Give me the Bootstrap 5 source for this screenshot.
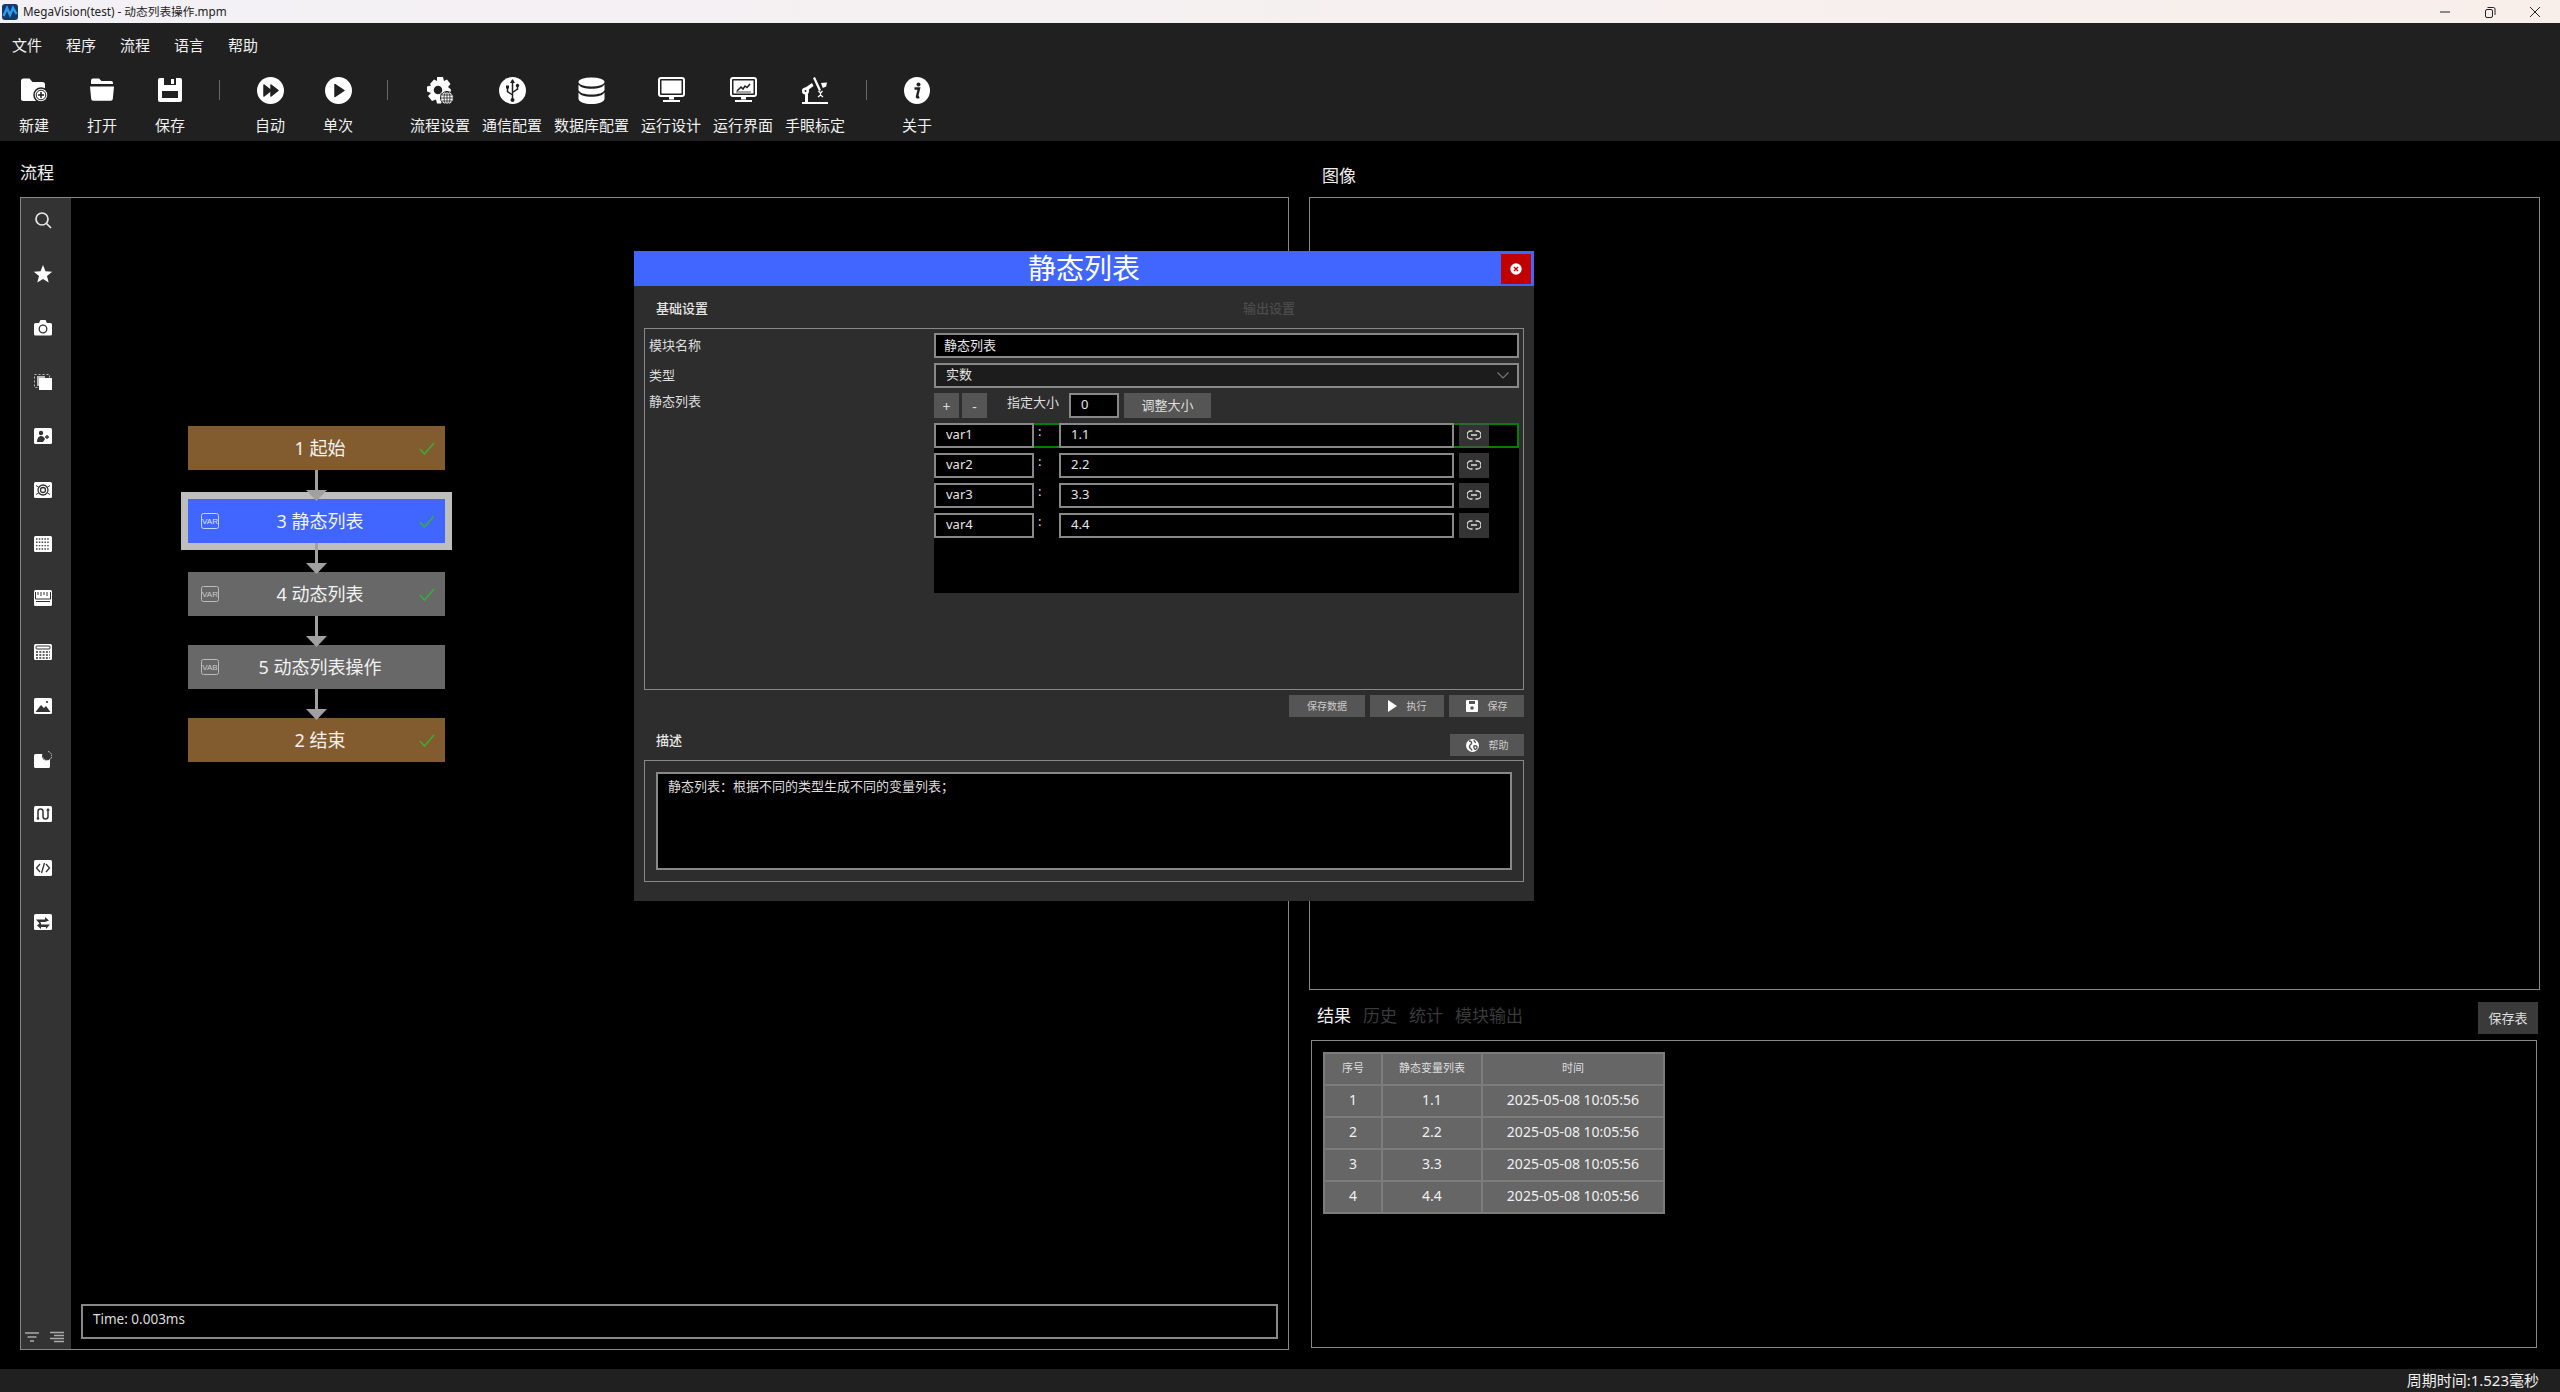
<!DOCTYPE html>
<html lang="zh-CN">
<head>
  <meta charset="UTF-8" />
  <title>MegaVision(test) - 动态列表操作.mpm</title>
  <link href="https://cdn.jsdelivr.net/npm/bootstrap@5.3.0/dist/css/bootstrap.min.css" rel="stylesheet" />
  <style>
    html, body {
      height: 100%;
      background: #000;
      color: #eee;
      font-family: "Noto Sans", "Noto Sans CJK SC", sans-serif;
      font-size: 13px;
      overflow: hidden;
    }
    svg { display: block; flex-shrink: 0; }

    .app-shell { height: 1392px; position: relative; }

    /* window chrome */
    .title-strip {
      height: 23px;
      background: linear-gradient(90deg, #f3f1f6, #f8efeb);
      color: #222;
      font-size: 11.7px;
      line-height: 23px;
      padding-left: 2px;
    }
    .title-strip span.win-name { margin-left: 5px; }
    .win-ctrl { margin-left: auto; padding-right: 18px; gap: 31px; }
    .menu-strip { height: 44px; background: #202020; padding: 11px 0 0 12px; gap: 24px; font-size: 15px; line-height: 22px; color: #f0f0f0; }
    .tool-strip { height: 74px; background: #202020; }
    .tool-item { min-width: 68px; padding: 10px 6px 0; text-align: center; font-size: 15px; line-height: 20px; color: #f0f0f0; white-space: nowrap; }
    .tool-ico { height: 26px; margin-bottom: 12px; display: flex; justify-content: center; }
    .tool-sep { width: 1px; height: 20px; background: #666; margin: 13px 16px 0 15px; }

    /* main columns */
    .main-area { height: 1228px; }
    .col-flow { width: 1269px; margin-left: 20px; }
    .col-view { width: 1231px; margin-left: 20px; }
    .pane-head { font-size: 17px; line-height: 24px; padding-top: 20px; margin-bottom: 12px; color: #eee; }
    .col-view .pane-head { padding: 23px 0 0 13px; margin-bottom: 9px; }

    .flow-pane { height: 1153px; border: 1px solid #888; }
    .side-rail { width: 50px; background: #333; padding: 13px 6px 0 0; gap: 36px; }
    .side-foot { margin: auto 0 6px 3px; gap: 11px; }
    .flow-canvas { min-width: 0; }
    .flow-col { width: 257px; margin: 228px 0 0 117px; }
    .flow-node { width: 257px; height: 44px; display: grid; grid-template-columns: 49px 1fr 42px; align-items: center; font-size: 18px; color: #f2f2f2; }
    .flow-node .node-txt { text-align: center; white-space: nowrap; line-height: 24px; margin-top: -1px; }
    .node-check { margin-left: 16px; }
    .var-ico { margin-left: 13px; }
    .node-start { background: #825c2e; }
    .node-sel { background: #4066ff; outline: 7px solid #bebebe; }
    .node-idle { background: #686868; }
    .flow-link { position: relative; z-index: 2; margin-bottom: -2px; }
    .time-box { height: 35px; margin: auto 10px 10px 10px; border: 2px solid #888; font-size: 13.5px; line-height: 18px; padding: 4px 10px; color: #ddd; }

    .view-box { height: 793px; border: 1px solid #888; }
    .tab-row { height: 50px; padding-top: 12px; }
    .res-tabs { gap: 12px; margin-left: 8px; font-size: 17px; line-height: 28px; color: #3a3a3a; }
    .res-tabs .on { color: #f0f0f0; }
    .btn.save-tbl { width: 60px; height: 32px; margin: 0 2px 0 auto; padding: 0; border: 0; border-radius: 0; background: #3a3a3a; color: #ddd; font-size: 13px; line-height: 32px; }
    .res-box { height: 308px; margin: 0 3px 0 2px; border: 1px solid #888; padding: 11px; }
    .result-tbl { --bs-table-bg: #666; --bs-table-color: #f0f0f0; width: 342px; margin: 0; table-layout: fixed; }
    .result-tbl th, .result-tbl td { border: 2px solid #7c7c7c; padding: 0 0 2px; height: 32px; text-align: center; vertical-align: middle; font-size: 14px; font-weight: 400; line-height: 20px; box-shadow: none; }
    .result-tbl th { font-size: 11px; color: #ddd; }
    .result-tbl th:nth-child(1) { width: 58px; }
    .result-tbl th:nth-child(2) { width: 100px; }

    .status-strip { height: 23px; background: #202020; font-size: 15px; line-height: 23px; padding-right: 21px; color: #f0f0f0; }

    /* dialog */
    .dlg { position: absolute; left: 634px; top: 251px; width: 900px; height: 650px; background: #2d2d2d; z-index: 5; }
    .dlg-head { position: relative; height: 35px; background: #4066ff; color: #fff; font-size: 28px; line-height: 35px; text-align: center; }
    .btn.dlg-close { position: absolute; right: 3px; top: 3px; width: 30px; height: 30px; padding: 0; border: 0; border-radius: 0; background: #c00000; display: flex; align-items: center; justify-content: center; }
    .dlg-tabs { height: 42px; padding: 13px 0 0 22px; font-size: 13px; line-height: 18px; font-weight: 500; color: #e6e6e6; }
    .dlg-tabs .off { margin-left: 535px; color: #4c4c4c; }
    .group-frame { margin: 0 10px; border: 1px solid #888; }
    .base-frame { height: 362px; padding-top: 4px; display: grid; grid-template-columns: 289px 585px; grid-template-rows: 25px 25px 25px 170px; row-gap: 5px; }
    .fld-lbl { padding-left: 4px; line-height: 25px; color: #ddd; }
    .fld-lbl.top { line-height: 17px; }
    .form-control.dk-in, .form-select.dk-in {
      height: 25px; min-height: 0; padding: 0 0 3px 8px; border: 2px solid #888; border-radius: 0;
      background-color: #000; color: #e6e6e6; font-size: 13px; line-height: 18px; box-shadow: none;
    }
    .form-select.dk-in {
      background-color: #1c1c1c; padding-left: 10px;
      background-image: url("data:image/svg+xml,%3Csvg xmlns='http://www.w3.org/2000/svg' viewBox='0 0 12 7'%3E%3Cpath d='M.5.5 6 6 11.5.5' fill='none' stroke='%23777' stroke-width='1.2'/%3E%3C/svg%3E");
      background-size: 12px 7px; background-position: right 8px center;
    }
    .sm-tool { gap: 3px; align-items: center; }
    .btn.dk-btn { height: 25px; padding: 0; border: 0; border-radius: 0; background: #555; color: #ddd; font-size: 13px; line-height: 25px; }
    .btn.sq-btn { width: 25px; font-size: 14px; line-height: 27px; }
    .size-lbl { margin-left: 17px; line-height: 18px; align-self: flex-start; color: #ddd; }
    .form-control.size-in { width: 50px; margin-left: 7px; padding-left: 10px; }
    .btn.fit-btn { width: 87px; margin-left: 2px; }
    .var-list { background: #000; height: 170px; gap: 5px; }
    .var-row { height: 25px; display: flex; }
    .row-pick { box-shadow: inset 0 0 0 2px #008000; }
    .form-control.var-name { width: 100px; flex: none; padding-left: 10px; }
    .var-colon { width: 25px; padding-left: 4px; line-height: 16px; color: #ddd; }
    .form-control.var-val { width: 395px; flex: none; padding-left: 10px; }
    .btn.link-btn { width: 30px; height: 25px; margin-left: 5px; padding: 0 0 2px; border: 0; border-radius: 0; background: rgba(85, 85, 85, .6); display: flex; align-items: center; justify-content: center; }
    .act-row { margin: 5px 10px 0 0; gap: 5px; height: 22px; }
    .btn.act-btn { height: 22px; padding: 0; border: 0; border-radius: 0; background: #555; color: #ccc; font-size: 10px; line-height: 22px; display: flex; align-items: center; justify-content: center; gap: 10px; }
    .act-data { width: 76px; }
    .act-run { width: 74px; }
    .act-save { width: 75px; }
    .desc-row { height: 43px; margin: 0 10px 0 22px; padding-top: 17px; align-items: flex-start; }
    .desc-row .desc-lbl { line-height: 18px; margin-top: -3px; color: #e6e6e6; font-weight: 500; }
    .desc-frame { height: 122px; padding: 11px; }
    .desc-txt { height: 98px; border: 2px solid #888; background: #000; color: #ddd; padding: 3px 10px; line-height: 18px; }
  </style>
</head>
<body>
<div class="app-shell d-flex flex-column">

  <!-- 标题栏 -->
  <div class="title-strip d-flex align-items-center">
    <svg width="16" height="16" viewBox="0 0 16 16"><rect width="16" height="16" rx="3" fill="#123a6b"/><path d="M1.500 12 5 4l3 7 3-7 3.500 6" fill="none" stroke="#2f9bf0" stroke-width="2.400"/></svg>
    <span class="win-name">MegaVision(test) - 动态列表操作.mpm</span>
    <div class="win-ctrl d-flex align-items-center">
      <svg width="14" height="14" viewBox="0 0 14 14"><path d="M2 7h10" stroke="#222" stroke-width="1"/></svg>
      <svg width="14" height="14" viewBox="0 0 14 14"><rect x="2.500" y="4.500" width="7" height="8" rx="1.500" fill="none" stroke="#222"/><path d="M4.500 2.500h6a1.500 1.500 0 0 1 1.500 1.500v6" fill="none" stroke="#222"/></svg>
      <svg width="14" height="14" viewBox="0 0 14 14"><path d="M2 2l10 10M12 2 2 12" stroke="#222" stroke-width="1"/></svg>
    </div>
  </div>

  <!-- 菜单 -->
  <div class="menu-strip d-flex">
    <span>文件</span><span>程序</span><span>流程</span><span>语言</span><span>帮助</span>
  </div>

  <!-- 工具栏 -->
  <div class="tool-strip d-flex align-items-start">
    <div class="tool-item"><div class="tool-ico"><svg width="28" height="26" viewBox="0 0 28 26"><path d="M1 4a2.500 2.500 0 0 1 2.500-2.500h6l3 3.500h10a2.500 2.500 0 0 1 2.500 2.500v14a2.500 2.500 0 0 1-2.500 2.500h-19A2.500 2.500 0 0 1 1 21.500z" fill="#fff"/><circle cx="21" cy="18" r="7" fill="#fff" stroke="#202020" stroke-width="1.500"/><circle cx="21" cy="18" r="4.800" fill="none" stroke="#202020" stroke-width="1"/><path d="M21 15v6M18 18h6" stroke="#202020" stroke-width="1.500"/></svg></div>新建</div>
    <div class="tool-item"><div class="tool-ico"><svg width="26" height="25" viewBox="0 0 26 25"><path d="M2 6V3.500A2 2 0 0 1 4 1.500h6l2.500 2.500H22a2 2 0 0 1 2 2v1H2z" fill="#fff"/><path d="M1 9.500h24l-1.200 12.500a2 2 0 0 1-2 1.800H4.200a2 2 0 0 1-2-1.800z" fill="#fff"/></svg></div>打开</div>
    <div class="tool-item"><div class="tool-ico"><svg width="24" height="25" viewBox="0 0 24 25"><path d="M2 1h20a2 2 0 0 1 2 2v20a2 2 0 0 1-2 2H2a2 2 0 0 1-2-2V3a2 2 0 0 1 2-2z" fill="#fff"/><path d="M6 1h12v7H6z" fill="#202020"/><path d="M13 2h3v5h-3z" fill="#fff"/><path d="M4 14h16v7H4z" fill="#202020"/></svg></div>保存</div>
    <div class="tool-sep"></div>
    <div class="tool-item"><div class="tool-ico"><svg width="27" height="27" viewBox="0 0 27 27"><circle cx="13.500" cy="13.500" r="13.500" fill="#fff"/><path d="M7 8l7 5.500L7 19z" fill="#202020" stroke="#202020" stroke-linejoin="round" stroke-width="1.500"/><path d="M14 8l7 5.500L14 19z" fill="#202020" stroke="#202020" stroke-linejoin="round" stroke-width="1.500"/></svg></div>自动</div>
    <div class="tool-item"><div class="tool-ico"><svg width="27" height="27" viewBox="0 0 27 27"><circle cx="13.500" cy="13.500" r="13.500" fill="#fff"/><path d="M10 7.500l9 6-9 6z" fill="#202020" stroke="#202020" stroke-linejoin="round" stroke-width="1.500"/></svg></div>单次</div>
    <div class="tool-sep"></div>
    <div class="tool-item"><div class="tool-ico"><svg width="28" height="28" viewBox="0 0 28 28"><path d="M11 0h6l1 4 3-1.500 3.500 4.500-2.500 3 3 2.500-1 6H19l-4 8H11l-1-4-4 1.500-4-5 3-3-4-1.500v-5l4-1L4 7 8 2.500l3 1.500z" fill="#fff"/><circle cx="12" cy="13" r="5" fill="#202020" stroke="#fff" stroke-width="1.500"/><path d="M15 17l3 3" stroke="#202020" stroke-width="2.500"/><circle cx="21" cy="21" r="6.500" fill="#fff" stroke="#202020"/><path d="M14.500 21h13M21 14.500v13M16 18h10M16 24h10" stroke="#202020" stroke-width=".8"/><ellipse cx="21" cy="21" rx="3" ry="6.500" fill="none" stroke="#202020" stroke-width=".8"/></svg></div>流程设置</div>
    <div class="tool-item"><div class="tool-ico"><svg width="27" height="27" viewBox="0 0 27 27"><circle cx="13.500" cy="13.500" r="13.500" fill="#fff"/><path d="M13.500 3v21M13.500 18l-5-3.500V11M13.500 15.500l5-3.500V9.500" fill="none" stroke="#202020" stroke-width="1.500"/><path d="M13.500 2l2.500 4h-5z" fill="#202020"/><rect x="7" y="8.500" width="3" height="3" fill="#202020"/><circle cx="18.500" cy="8.500" r="1.700" fill="#202020"/><circle cx="13.500" cy="23" r="2" fill="#202020"/></svg></div>通信配置</div>
    <div class="tool-item"><div class="tool-ico"><svg width="27" height="28" viewBox="0 0 27 28"><ellipse cx="13.500" cy="5" rx="13" ry="4.500" fill="#fff"/><path d="M.5 7.500c2 3 6.500 4.200 13 4.200s11-1.200 13-4.200V13c-1 3-6 4.500-13 4.500S1.500 16 .5 13z" fill="#fff"/><path d="M.5 15.500c2 3 6.500 4.200 13 4.200s11-1.200 13-4.200V22c-1 3.500-6 5-13 5S1.500 25.500.5 22z" fill="#fff"/></svg></div>数据库配置</div>
    <div class="tool-item"><div class="tool-ico"><svg width="27" height="26" viewBox="0 0 27 26"><rect x="1" y="1" width="25" height="18" rx="2" fill="none" stroke="#fff" stroke-width="2"/><rect x="3.500" y="3.500" width="20" height="13" fill="#fff"/><path d="M11 20h5v2.500h-5zM5 23h17v2H5z" fill="#fff"/></svg></div>运行设计</div>
    <div class="tool-item"><div class="tool-ico"><svg width="27" height="26" viewBox="0 0 27 26"><rect x="1" y="1" width="25" height="18" rx="2" fill="none" stroke="#fff" stroke-width="2"/><rect x="3.500" y="3.500" width="20" height="13" fill="#fff"/><path d="M7 14l4-4 2 2 2-3 2 1.500 3-3.500" fill="none" stroke="#202020" stroke-width="1.500"/><path d="M6 15h15" stroke="#202020" stroke-width=".8"/><path d="M11 20h5v2.500h-5zM5 23h17v2H5z" fill="#fff"/></svg></div>运行界面</div>
    <div class="tool-item"><div class="tool-ico"><svg width="28" height="27" viewBox="0 0 28 27"><path d="M1 25h26v2H1zM4 15h3v10H4z" fill="#fff"/><path d="M1 13l10-7 1.500 3-8 6z" fill="#fff"/><circle cx="4.500" cy="14" r="3.500" fill="#fff"/><circle cx="4.500" cy="14" r="1" fill="#202020"/><path d="M12 1l2-1 6 13-2 1z" fill="#fff"/><path d="M20 6l6-.5-.8 4-3.500 1.500z" fill="#fff"/><path d="M17.500 14l2 2 2-2M19.500 16v2M17 20l2.500-2 2.500 2" fill="none" stroke="#fff" stroke-width="1.300"/></svg></div>手眼标定</div>
    <div class="tool-sep"></div>
    <div class="tool-item"><div class="tool-ico"><svg width="26" height="27" viewBox="0 0 26 27"><ellipse cx="13" cy="13.500" rx="13" ry="13.500" fill="#fff"/><circle cx="14.500" cy="7.500" r="2" fill="#202020"/><path d="M10.500 11.500h4.500l-2 8c-.2 1 .6 1 2.200.3" fill="none" stroke="#202020" stroke-width="2.400"/></svg></div>关于</div>
  </div>

  <!-- 主区域 -->
  <div class="main-area d-flex">
    <div class="col-flow">
      <div class="pane-head">流程</div>
      <div class="flow-pane d-flex">
        <div class="side-rail d-flex flex-column align-items-center">
          <svg width="18" height="18" viewBox="0 0 18 18"><circle cx="8" cy="8" r="6" fill="none" stroke="#e8e8e8" stroke-width="1.700"/><path d="M12.500 12.500 17 17" stroke="#e8e8e8" stroke-width="1.700"/></svg>
          <svg width="20" height="18" viewBox="0 0 20 19"><path d="m10 0 2.600 6.600 7.100.5-5.500 4.500 1.800 7L10 14.800l-6 3.800 1.800-7L.3 7.100l7.100-.5z" fill="#fff"/></svg>
          <svg width="18" height="18" viewBox="0 0 18 18"><path d="M1.500 4H5l1.500-3h5l1.500 3h3.500A1.500 1.500 0 0 1 18 5.500V15a1.500 1.500 0 0 1-1.500 1.500h-15A1.500 1.500 0 0 1 0 15V5.500A1.500 1.500 0 0 1 1.500 4z" fill="#fff"/><circle cx="9" cy="10" r="3.800" fill="none" stroke="#333" stroke-width="1.300"/></svg>
          <svg width="18" height="18" viewBox="0 0 18 18"><rect x=".5" y="1.500" width="15" height="13" fill="none" stroke="#bbb" stroke-dasharray="2 2"/><rect x="3" y="3" width="8" height="10" fill="#bbb"/><rect x="5" y="5" width="13" height="12" fill="#fff"/></svg>
          <svg width="18" height="18" viewBox="0 0 18 18"><rect y="1" width="18" height="16" rx="1.500" fill="#fff"/><circle cx="7" cy="6" r="2.200" fill="#333"/><path d="M3 15c0-4 2-6 4-6s3 1 4 3l-2 3z" fill="#333"/><path d="M13 8v4M11 10h4" stroke="#333" stroke-width="1.300"/></svg>
          <svg width="18" height="18" viewBox="0 0 18 18"><rect y="1" width="18" height="16" rx="1.500" fill="#fff"/><circle cx="9" cy="9" r="5" fill="none" stroke="#333" stroke-width="1.300"/><circle cx="9" cy="9" r="2.500" fill="none" stroke="#333" stroke-width="1.300"/><path d="M2 4.500l2.500 1.500M16 4.500 13.500 6M2 13.500 4.500 12M16 13.500 13.500 12" stroke="#333" stroke-width="1"/></svg>
          <svg width="18" height="18" viewBox="0 0 18 18"><rect y="1" width="18" height="16" rx="1.500" fill="#fff"/><path d="M2 4h14M2 7.300h14M2 10.600h14M2 14h14" stroke="#444" stroke-dasharray="1.500 1.300" stroke-width="1.400"/></svg>
          <svg width="18" height="18" viewBox="0 0 18 18"><rect y="1" width="18" height="16" rx="1.500" fill="#fff"/><path d="M1.500 3v7h15V3M4 3v3M7 3v4M10 3v3M13 3v4" fill="none" stroke="#333" stroke-width="1"/><path d="M2 12.500h14" stroke="#333" stroke-width="1"/></svg>
          <svg width="18" height="18" viewBox="0 0 18 18"><rect y="1" width="18" height="16" rx="1.500" fill="#fff"/><rect x="2" y="3" width="14" height="3" rx="1" fill="none" stroke="#333"/><path d="M2 9h14M2 12h14M2 15h14" stroke="#333" stroke-dasharray="2 1.300" stroke-width="1.400"/></svg>
          <svg width="18" height="18" viewBox="0 0 18 18"><rect y="1" width="18" height="16" rx="1.500" fill="#fff"/><path d="M1.500 15 7 8l3 3 2-2 4.500 6z" fill="#333"/><circle cx="13" cy="5" r="1.100" fill="#333"/></svg>
          <svg width="18" height="18" viewBox="0 0 18 18"><rect y="3" width="16" height="14" rx="1.500" fill="#fff"/><circle cx="12.500" cy="5" r="4.500" fill="#333"/><path d="M14 .5a4.500 4.500 0 1 1-5 6" fill="none" stroke="#ddd" stroke-dasharray="1.500 1" stroke-width="1"/></svg>
          <svg width="18" height="18" viewBox="0 0 18 18"><rect y="1" width="18" height="16" rx="1.500" fill="#fff"/><path d="M4 13V6.500a2.500 2.500 0 0 1 5 0v5a2.500 2.500 0 0 0 5 0V5" fill="none" stroke="#333" stroke-width="1.500"/><circle cx="4" cy="13.500" r="1.300" fill="#333"/><path d="M14 3l2 2.500h-4z" fill="#333"/></svg>
          <svg width="18" height="18" viewBox="0 0 18 18"><rect y="1" width="18" height="16" rx="1.500" fill="#fff"/><path d="M6 5 2.500 9 6 13M12 5l3.500 4L12 13M10.500 4l-3 10" fill="none" stroke="#333" stroke-width="1.300"/></svg>
          <svg width="18" height="18" viewBox="0 0 18 18"><rect y="1" width="18" height="16" rx="1.500" fill="#fff"/><path d="M2 6.500h9V4l4 3.500L11 9H6V11L2 6.500z" fill="#333"/><path d="M16 11.500H7V9l-4 3.500L7 16v-2h5v2z" fill="#333"/></svg>
          <div class="side-foot d-flex">
            <svg width="14" height="12" viewBox="0 0 14 12"><path d="M0 2h14M2.500 6h9M5 10h4" stroke="#aaa" stroke-width="1.300"/></svg>
            <svg width="14" height="12" viewBox="0 0 14 12"><path d="M0 1.500h14M4 4.500h10M0 7.500h14M4 10.500h10" stroke="#aaa" stroke-width="1.300"/></svg>
          </div>
        </div>

        <div class="flow-canvas flex-grow-1 d-flex flex-column">
          <div class="flow-col d-flex flex-column align-items-center">
            <div class="flow-node node-start"><span></span><span class="node-txt">1 起始</span><svg class="node-check" width="16" height="13" viewBox="0 0 16 13"><path d="M1 7l4.500 5L15 1" fill="none" stroke="#35b035" stroke-width="1.500"/></svg></div>
            <svg class="flow-link" width="21" height="31" viewBox="0 0 21 31"><path d="M9 0h3v21H9z" fill="#a0a0a0"/><path d="M0 20h21L10.500 31z" fill="#a0a0a0"/></svg>
            <div class="flow-node node-sel"><svg class="var-ico" width="18" height="16" viewBox="0 0 18 16"><rect x=".5" y=".5" width="17" height="15" rx="2" fill="none" stroke="#c8d2ff"/><text x="9" y="11" font-size="8" text-anchor="middle" fill="#dfe5ff" font-family="Liberation Sans">VAR</text></svg><span class="node-txt">3 静态列表</span><svg class="node-check" width="16" height="13" viewBox="0 0 16 13"><path d="M1 7l4.500 5L15 1" fill="none" stroke="#35b035" stroke-width="1.500"/></svg></div>
            <svg class="flow-link" width="21" height="31" viewBox="0 0 21 31"><path d="M9 0h3v21H9z" fill="#a0a0a0"/><path d="M0 20h21L10.500 31z" fill="#a0a0a0"/></svg>
            <div class="flow-node node-idle"><svg class="var-ico" width="18" height="16" viewBox="0 0 18 16"><rect x=".5" y=".5" width="17" height="15" rx="2" fill="none" stroke="#bbb"/><text x="9" y="11" font-size="8" text-anchor="middle" fill="#ccc" font-family="Liberation Sans">VAR</text></svg><span class="node-txt">4 动态列表</span><svg class="node-check" width="16" height="13" viewBox="0 0 16 13"><path d="M1 7l4.500 5L15 1" fill="none" stroke="#35b035" stroke-width="1.500"/></svg></div>
            <svg class="flow-link" width="21" height="31" viewBox="0 0 21 31"><path d="M9 0h3v21H9z" fill="#a0a0a0"/><path d="M0 20h21L10.500 31z" fill="#a0a0a0"/></svg>
            <div class="flow-node node-idle"><svg class="var-ico" width="18" height="16" viewBox="0 0 18 16"><rect x=".5" y=".5" width="17" height="15" rx="2" fill="none" stroke="#bbb"/><text x="9" y="11" font-size="8" text-anchor="middle" fill="#ccc" font-family="Liberation Sans">VAB</text></svg><span class="node-txt">5 动态列表操作</span><span></span></div>
            <svg class="flow-link" width="21" height="31" viewBox="0 0 21 31"><path d="M9 0h3v21H9z" fill="#a0a0a0"/><path d="M0 20h21L10.500 31z" fill="#a0a0a0"/></svg>
            <div class="flow-node node-start"><span></span><span class="node-txt">2 结束</span><svg class="node-check" width="16" height="13" viewBox="0 0 16 13"><path d="M1 7l4.500 5L15 1" fill="none" stroke="#35b035" stroke-width="1.500"/></svg></div>
          </div>
          <div class="time-box">Time: 0.003ms</div>
        </div>
      </div>
    </div>

    <div class="col-view">
      <div class="pane-head">图像</div>
      <div class="view-box"></div>
      <div class="tab-row d-flex align-items-start">
        <div class="res-tabs d-flex">
          <span class="on">结果</span><span>历史</span><span>统计</span><span>模块输出</span>
        </div>
        <button class="btn save-tbl" type="button">保存表</button>
      </div>
      <div class="res-box">
        <table class="table result-tbl">
          <thead><tr><th>序号</th><th>静态变量列表</th><th>时间</th></tr></thead>
          <tbody>
            <tr><td>1</td><td>1.1</td><td>2025-05-08 10:05:56</td></tr>
            <tr><td>2</td><td>2.2</td><td>2025-05-08 10:05:56</td></tr>
            <tr><td>3</td><td>3.3</td><td>2025-05-08 10:05:56</td></tr>
            <tr><td>4</td><td>4.4</td><td>2025-05-08 10:05:56</td></tr>
          </tbody>
        </table>
      </div>
    </div>
  </div>

  <div class="status-strip text-end">周期时间:1.523毫秒</div>

  <!-- 静态列表 对话框 -->
  <div class="dlg">
    <div class="dlg-head">静态列表
      <button class="btn dlg-close" type="button" aria-label="关闭"><svg width="12" height="12" viewBox="0 0 12 12"><circle cx="6" cy="6" r="5.700" fill="#fff"/><path d="M4 4l4 4M8 4 4 8" stroke="#c00000" stroke-width="1.300"/></svg></button>
    </div>
    <div class="dlg-tabs d-flex"><span>基础设置</span><span class="off">输出设置</span></div>

    <div class="group-frame base-frame">
      <div class="fld-lbl">模块名称</div>
      <input class="form-control dk-in" value="静态列表" />
      <div class="fld-lbl">类型</div>
      <select class="form-select dk-in"><option>实数</option></select>
      <div class="fld-lbl top">静态列表</div>
      <div class="d-flex sm-tool">
        <button class="btn dk-btn sq-btn" type="button">+</button>
        <button class="btn dk-btn sq-btn" type="button">-</button>
        <span class="size-lbl">指定大小</span>
        <input class="form-control dk-in size-in" value="0" />
        <button class="btn dk-btn fit-btn" type="button">调整大小</button>
      </div>
      <div></div>
      <div class="var-list d-flex flex-column">
        <div class="var-row row-pick">
          <input class="form-control dk-in var-name" value="var1" /><span class="var-colon">:</span><input class="form-control dk-in var-val" value="1.1" />
          <button class="btn link-btn" type="button"><svg width="14" height="10" viewBox="0 0 14 10"><path d="M5.500 1H4a4 4 0 0 0 0 8h1.500M8.500 1H10a4 4 0 0 1 0 8H8.500M4 5h6" fill="none" stroke="#ddd" stroke-width="1.300"/></svg></button>
        </div>
        <div class="var-row">
          <input class="form-control dk-in var-name" value="var2" /><span class="var-colon">:</span><input class="form-control dk-in var-val" value="2.2" />
          <button class="btn link-btn" type="button"><svg width="14" height="10" viewBox="0 0 14 10"><path d="M5.500 1H4a4 4 0 0 0 0 8h1.500M8.500 1H10a4 4 0 0 1 0 8H8.500M4 5h6" fill="none" stroke="#ddd" stroke-width="1.300"/></svg></button>
        </div>
        <div class="var-row">
          <input class="form-control dk-in var-name" value="var3" /><span class="var-colon">:</span><input class="form-control dk-in var-val" value="3.3" />
          <button class="btn link-btn" type="button"><svg width="14" height="10" viewBox="0 0 14 10"><path d="M5.500 1H4a4 4 0 0 0 0 8h1.500M8.500 1H10a4 4 0 0 1 0 8H8.500M4 5h6" fill="none" stroke="#ddd" stroke-width="1.300"/></svg></button>
        </div>
        <div class="var-row">
          <input class="form-control dk-in var-name" value="var4" /><span class="var-colon">:</span><input class="form-control dk-in var-val" value="4.4" />
          <button class="btn link-btn" type="button"><svg width="14" height="10" viewBox="0 0 14 10"><path d="M5.500 1H4a4 4 0 0 0 0 8h1.500M8.500 1H10a4 4 0 0 1 0 8H8.500M4 5h6" fill="none" stroke="#ddd" stroke-width="1.300"/></svg></button>
        </div>
      </div>
    </div>

    <div class="act-row d-flex justify-content-end">
      <button class="btn act-btn act-data" type="button">保存数据</button>
      <button class="btn act-btn act-run" type="button"><svg width="9" height="12" viewBox="0 0 9 12"><path d="M0 0l9 6-9 6z" fill="#fff"/></svg>执行</button>
      <button class="btn act-btn act-save" type="button"><svg width="12" height="12" viewBox="0 0 12 12"><path d="M1 0h10a1 1 0 0 1 1 1v10a1 1 0 0 1-1 1H1a1 1 0 0 1-1-1V1a1 1 0 0 1 1-1z" fill="#fff"/><path d="M3 1h6v3H3z" fill="#555"/><circle cx="6" cy="8" r="1.800" fill="#555"/></svg>保存</button>
    </div>

    <div class="desc-row d-flex justify-content-between">
      <span class="desc-lbl">描述</span>
      <button class="btn act-btn act-run" type="button"><svg width="13" height="13" viewBox="0 0 13 13"><circle cx="6.500" cy="6.500" r="6.500" fill="#fff"/><path d="M3 2c2 0 3 1 2.500 2.500S3 6 3.500 8s2 1.500 2.500 3.500M8 1c0 2 1 2 2 2.500M8 7c1.500-.5 3 0 3 1.500S9 11 8.500 10 7.500 8 8 7z" fill="none" stroke="#555" stroke-width="1.400"/></svg>帮助</button>
    </div>

    <div class="group-frame desc-frame">
      <div class="desc-txt">静态列表：根据不同的类型生成不同的变量列表；</div>
    </div>
  </div>
</div>
<script src="https://cdn.jsdelivr.net/npm/bootstrap@5.3.0/dist/js/bootstrap.bundle.min.js"></script>
</body>
</html>
